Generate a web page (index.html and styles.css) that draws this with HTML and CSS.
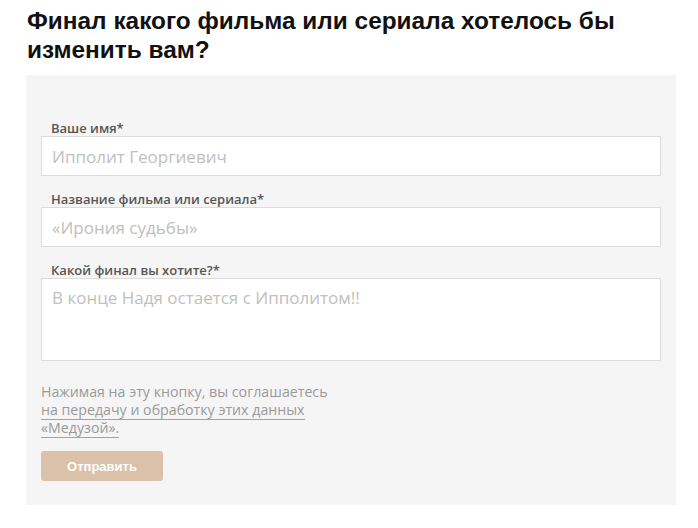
FILE: index.html
```html
<!DOCTYPE html>
<html lang="ru">
<head>
    <meta charset="UTF-8">
    <meta name="viewport" content="width=device-width, initial-scale=1.0">
    <title>Финал фильма</title>
    <link rel="stylesheet" href="styles.css">
</head>

<body>
    <div class="page">
        <h1>Финал какого фильма или сериала хотелось бы изменить вам?</h1>

        <!-- Survey form -->
        <form class="panel" id="endingForm" method="POST">
            <label for="name">Ваше имя*</label>
            <input type="text" id="name" name="name" required placeholder="Ипполит Георгиевич">

            <label for="movie">Название фильма или сериала*</label>
            <input type="text" id="movie" name="movie" required placeholder="«Ирония судьбы»">

            <label for="ending">Какой финал вы хотите?*</label>
            <textarea id="ending" name="ending" required placeholder="В конце Надя остается с Ипполитом!!"></textarea>

            <p class="consent">
                Нажимая на эту кнопку, вы соглашаетесь<br>
                <a href="#">на передачу и обработку этих данных</a><br>
                <a href="#">«Медузой».</a>
            </p>

            <button type="submit">Отправить</button>
        </form>
    </div>
</body>

</html>
```

FILE: styles.css
```css
/* General Styles */
body {
    font-family: "Open Sans", Arial, sans-serif;
    margin: 0;
    padding: 0;
    background: #fff;
}

.page {
    padding: 6px 22px 0 26px;
}

h1 {
    margin: 0 0 11px 1px;
    font-family: "Liberation Sans", Arial, sans-serif;
    font-size: 24.4px;
    line-height: 29px;
    font-weight: bold;
    color: #111;
}

.panel {
    background-color: #f5f5f5;
    width: 650px;
    box-sizing: border-box;
    padding: 45px 15px 24px 15px;
}

label {
    display: block;
    padding-left: 10px;
    font-size: 13px;
    line-height: 16px;
    font-weight: 600;
    color: #555;
}

input[type="text"],
textarea {
    display: block;
    width: 100%;
    box-sizing: border-box;
    height: 40px;
    padding: 0 10px;
    margin: 0 0 15px 0;
    border: 1px solid #dcdcdc;
    border-radius: 0;
    background: #fff;
    font-family: "Open Sans", Arial, sans-serif;
    font-size: 17px;
    color: #333;
}

textarea {
    height: 83px;
    padding: 7px 10px;
    resize: none;
    margin-bottom: 22px;
}

input::placeholder,
textarea::placeholder {
    color: #c0c0c0;
}

.consent {
    margin: 0 0 14px 0;
    font-size: 14.2px;
    line-height: 18px;
    color: #9a9a9a;
}

.consent a {
    color: #9a9a9a;
    text-decoration: none;
    border-bottom: 1px solid #c69c6c;
}

button {
    width: 122px;
    height: 30px;
    background-color: #dac1a7;
    color: #fff;
    border: none;
    border-radius: 3px;
    cursor: pointer;
    font-family: "Liberation Sans", Arial, sans-serif;
    font-size: 13px;
    font-weight: bold;
}
```
